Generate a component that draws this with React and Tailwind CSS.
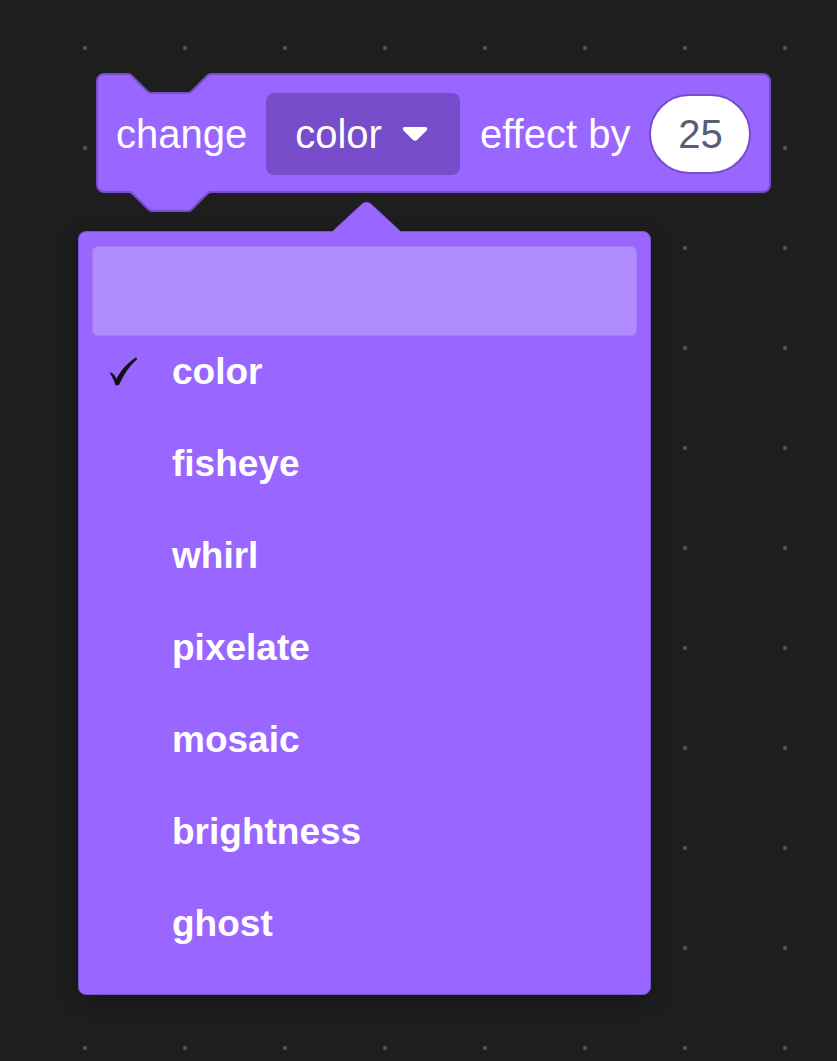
const items = ['color', 'fisheye', 'whirl', 'pixelate', 'mosaic', 'brightness', 'ghost'];

function BlockShape() {
  return (
    <svg
      className="absolute left-0 top-0 overflow-visible"
      width="675"
      height="141"
      viewBox="0 0 675 141"
    >
      <path
        d="M1,8 a7,7 0 0 1 7,-7 H32 c2,0 3,1 4,2 l15,15 c1,1 2,2 4,2 H92 c2,0 3,-1 4,-2 l15,-15 c1,-1 2,-2 4,-2 H667 a7,7 0 0 1 7,7 V112 a7,7 0 0 1 -7,7 H115 c-2,0 -3,1 -4,2 l-15,15 c-1,1 -2,2 -4,2 H56 c-2,0 -3,-1 -4,-2 l-15,-15 c-1,-1 -2,-2 -4,-2 H8 a7,7 0 0 1 -7,-7 Z"
        fill="#9966ff"
        stroke="#774dcb"
        strokeWidth="2"
      />
    </svg>
  );
}

function CheckMark() {
  return (
    <svg width="30" height="30" viewBox="0 0 30 30" className="shrink-0">
      <path
        d="M1,16 C3,15.5 5,17.5 6.5,20.5 L7.5,22.5 C11.5,14 18.5,6 27,0.8 L28,2 C20.5,8.5 14.5,17 10,27.5 L6.8,28.2 C5.5,23.5 3.5,19.5 1,16 Z"
        fill="#111"
        stroke="#111"
        strokeWidth="0.6"
        strokeLinejoin="round"
      />
    </svg>
  );
}

export default function App() {
  return (
    <div
      className="w-[837px] h-[1061px] overflow-hidden bg-[#1e1e1e] bg-[radial-gradient(circle,#525252_1.8px,transparent_2.6px)] bg-[length:100px_100px] bg-[position:35px_-2px] pt-[73px] pl-[78px]"
      style={{ fontFamily: '"Liberation Sans", Arial, sans-serif' }}
    >
      {/* Block */}
      <div className="relative ml-[18px] w-[675px] h-[120px]">
        <BlockShape />
        <div className="relative flex items-center h-full pl-[20px] pt-[2px] text-white text-[40px]">
          <span>change</span>
          <div className="ml-[19px] flex items-center h-[82px] rounded-[8px] bg-[#774dcb] pl-[29px] pr-[32px]">
            <span>color</span>
            <svg width="26" height="16" viewBox="0 0 26 16" className="ml-[20px]">
              <path
                d="M3,1 H23 C25,1 26,3 24.5,4.5 L15,14 C14,15 12,15 11,14 L1.5,4.5 C0,3 1,1 3,1 Z"
                fill="#fff"
              />
            </svg>
          </div>
          <span className="ml-[20px]">effect by</span>
          <div className="ml-[19px] flex items-center justify-center w-[102px] h-[80px] rounded-full bg-white border-2 border-[#774dcb] text-[#575e75]">
            25
          </div>
        </div>
      </div>

      {/* Dropdown menu */}
      <div className="relative mt-[38px] w-[573px] h-[764px] rounded-[8px] bg-[#9966ff] border border-[#7a52d6] shadow-[0_4px_20px_rgba(0,0,0,0.3)] pt-[14px] px-[13px]">
        <svg
          className="absolute left-[254px] top-[-30px]"
          width="67"
          height="31"
          viewBox="0 0 67 31"
        >
          <path d="M0,31 L0,29 L29,2 Q33.5,-1.5 38,2 L67,29 L67,31 Z" fill="#9966ff" />
          <path d="M0,29 L29,2 Q33.5,-1.5 38,2 L67,29" fill="none" stroke="#7a52d6" strokeWidth="1" />
        </svg>
        <div className="h-[90px] rounded-[6px] bg-[#b18cff] border border-[#a47cf4]" />
        <div className="flex flex-col gap-[20px]">
          {items.map((item, i) => (
            <div key={item} className="flex items-center h-[72px] pl-[17px]">
              <div className="w-[63px]">{i === 0 && <CheckMark />}</div>
              <span className="text-white font-bold text-[37px]">{item}</span>
            </div>
          ))}
        </div>
      </div>
    </div>
  );
}
